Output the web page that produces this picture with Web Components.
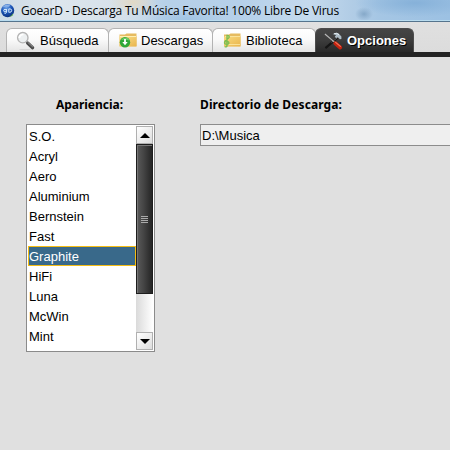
<!DOCTYPE html>
<html lang="es">
<head>
<meta charset="utf-8">
<title>GoearD</title>
<style>
html,body{margin:0;height:100%;overflow:hidden;background:#e0e0e0}
body{font:13px/20px "Liberation Sans",Arial,sans-serif;color:#000}
</style>
</head>
<body>
<goear-app></goear-app>
<script>
const define = (name, html, init) => customElements.define(name, class extends HTMLElement {
  constructor() {
    super();
    this.attachShadow({mode: 'open'}).innerHTML = html;
  }
  connectedCallback() { if (init) init(this, this.shadowRoot); }
});

/* A one-line label whose tracking is adjusted to fill the given width. */
define('fit-label', `<style>:host{display:inline-block;white-space:pre}span{display:inline-block}</style><span><slot></slot></span>`,
  (el, root) => {
    const s = root.querySelector('span'), w = +el.getAttribute('w');
    if (w) s.style.letterSpacing = (w - s.getBoundingClientRect().width) / el.textContent.length + 'px';
  });

const icons = {
  app: `<svg width="16" height="16" viewBox="0 0 16 16"><defs><radialGradient id="g" cx=".4" cy=".25" r=".8"><stop offset="0" stop-color="#6fa4e8"/><stop offset=".5" stop-color="#1c55b8"/><stop offset="1" stop-color="#0a2c78"/></radialGradient></defs><circle cx="7.6" cy="7.6" r="6.6" fill="url(#g)"/><path d="M2.6 4.4Q5 .9 10.5 1.8L9 3.8Q5 3.2 2.6 4.4Z" fill="#b5d2f5" opacity=".6"/><circle cx="5" cy="7.6" r="1.3" fill="none" stroke="#d5e9fc" stroke-width="1"/><path d="M6.6 6V9.4Q6.4 10.6 4.4 10.2M8.8 5.9h1.2q1.9.2 1.7 1.8t-2 1.6H8.8z" fill="none" stroke="#d5e9fc" stroke-width="1"/><path d="M9 13.6Q12 12.6 13 10.4L13.2 12L11.2 13.6Z" fill="#69b94f"/></svg>`,
  search: `<svg width="20" height="20" viewBox="0 0 20 20"><ellipse cx="9" cy="18.6" rx="6" ry=".7" fill="#d5d5d5"/><path d="M11.6 12L16.6 16.7" stroke="#4a4a4a" stroke-width="3.3" stroke-linecap="round"/><path d="M11.6 11.2L16.8 16" stroke="#999" stroke-width="1"/><circle cx="6.8" cy="6.7" r="5.2" fill="#edf0f1" stroke="#b4b4b4" stroke-width="1.4"/><path d="M3.3 7Q3.6 3.7 7.5 3.4" fill="none" stroke="#fff" stroke-width="1.8"/></svg>`,
  down: `<svg width="20" height="18" viewBox="0 0 20 18"><defs><linearGradient id="f" x2="1" y2="1"><stop offset="0" stop-color="#fae08e"/><stop offset="1" stop-color="#e9b54c"/></linearGradient></defs><path d="M1.5 2.5H7L8.5 1.6H18.5V14.3H1.5Z" fill="#e6bb60"/><path d="M1.5 4.5H18.5V14.5H1.5Z" fill="url(#f)"/><path d="M2 4.5H18" stroke="#fff0b4"/><circle cx="7" cy="10.2" r="5.2" fill="#2fa838"/><path d="M3 8Q5 5 9.5 5.8Q11 7 11.2 8.5Q7 7 3 8Z" fill="#80d775" opacity=".8"/><path d="M6.1 7h1.8v3h1.8L7 13.2 4.3 10h1.8z" fill="#fff"/></svg>`,
  music: `<svg width="20" height="18" viewBox="0 0 20 18"><defs><linearGradient id="f" x2="1" y2="1"><stop offset="0" stop-color="#f9da80"/><stop offset="1" stop-color="#e9b54c"/></linearGradient></defs><path d="M2 2.5H7L8.5 1.6H18.5V14.3H2Z" fill="#e6bb60"/><path d="M2 4.5H18.5V14.5H2Z" fill="url(#f)"/><path d="M3 4.5H18M3 12.5H18" stroke="#fff0b4" stroke-width=".7"/><path d="M5 14.5L5 3.4Q7.8 3.3 7 5.7L3.2 9Q1.3 11.8 4.6 12.5Q7.8 12 6.6 10Q5 9 4 10.4M5 13.5Q4.6 15.7 2.7 14.5" fill="none" stroke="#7dbf52" stroke-width="1.4"/></svg>`,
  tools: `<svg width="21" height="20" viewBox="0 0 21 20"><path d="M14.4 6.8L2.4 17.2" stroke="#151515" stroke-width="2.2"/><path d="M14.8 6.2L8.5 11.4" stroke="#777" stroke-width=".8"/><path d="M9.6 3.2Q13 .4 15.6 2.6L18.4 5.6V8L16.9 8.3L14.6 6L13.2 7.2L11.8 5.7L13 4.3Q11.6 3 9.6 3.2Z" fill="#aebdc7"/><path d="M11 2.8Q14 1.4 16 3.8" stroke="#e4ecf1" fill="none"/><path d="M1.9 3L11.5 11.2" stroke="#b9b9b9" stroke-width="1.1"/><path d="M12.4 12.2L17.2 16.5" stroke="#c5230f" stroke-width="3.9" stroke-linecap="round"/><path d="M12.6 11.4L17.4 15.4" stroke="#f4785f" stroke-width="1.1" stroke-linecap="round"/></svg>`
};
define('ui-icon', `<style>:host{display:block;flex:none}svg{display:block}</style>`,
  (el, root) => root.innerHTML += icons[el.getAttribute('name')]);

define('title-bar', `<style>
:host{display:flex;box-sizing:border-box;height:22px;padding:2px 0 0;border-bottom:1px solid #55748d;
font:12px/18px "Open Sans","Noto Sans",sans-serif;color:#000;box-shadow:inset 0 -1px #b9dcef;
background:radial-gradient(ellipse 9px 7px at 364px 14px,#6f95b8a0,transparent),radial-gradient(ellipse 60px 14px at 415px 3px,#86b1d9,transparent),radial-gradient(ellipse 24px 12px at 133px 2px,#e2d9c5,transparent),radial-gradient(ellipse 40px 12px at 185px 20px,#92bce0a0,transparent),linear-gradient(90deg,#cddae5 0,#dde6ed 60px,#d5e0ea 125px,#b7d0e8 165px,#b5d0ea 240px,#c5daed 310px,#b2cde6 350px,#a5c6e4 380px,#9cc1e3 450px)}
ui-icon{margin:1px 5px 0 0}
</style><ui-icon name="app"></ui-icon><slot></slot>`);

define('ui-tab', `<style>
:host{display:flex;box-sizing:border-box;height:24px;align-items:center;padding:1px 0 0 9px;border:1px solid #b3b3b3;border-bottom:0;border-radius:6px 6px 0 0;margin-right:-1px;background:linear-gradient(#fff,#fafafa 45%,#e4e4e4)}
:host([active]){background:linear-gradient(#454545,#3c3c3c 50%,#292929);border-color:#4c4c4c;color:#fff;font-weight:bold;text-shadow:1px 1px #000}
ui-icon{margin-right:var(--gap,4px)}
</style><ui-icon></ui-icon><slot></slot>`, (el, root) => {
  el.style.width = el.getAttribute('w') + 'px';
  const icon = document.createElement('ui-icon');
  icon.setAttribute('name', el.getAttribute('icon'));
  root.querySelector('ui-icon').replaceWith(icon);
});

define('tab-strip', `<style>
:host{display:flex;box-sizing:border-box;height:35px;padding:6px 0 0 6px;align-items:flex-start;background:linear-gradient(#e0e0e0,#dcdcdc);border-bottom:5px solid #242424}
</style><slot></slot>`);

define('list-row', `<style>
:host{display:block;box-sizing:border-box;height:20px;padding:0 1px;line-height:22px}
:host([selected]){background:#39698a;color:#fff;border:1px solid #f5bd13;padding:0;line-height:20px}
</style><slot></slot>`);

define('scroll-bar', `<style>
:host{display:flex;flex-direction:column;width:17px;background:linear-gradient(90deg,#dadada,#fff)}
.b{box-sizing:border-box;height:18px;border:1px solid #b0b0b0;background:linear-gradient(135deg,#fff,#ddd);display:flex;align-items:center;justify-content:center}
.t{box-sizing:border-box;height:150px;border:1px solid #1d1d1d;box-shadow:inset 1px 1px #777;background:linear-gradient(90deg,#5a5a5a,#444 45%,#252525);display:flex;align-items:center;justify-content:center}
.g{width:7px;height:7px;background:repeating-linear-gradient(#aaa 0 1px,transparent 1px 2px)}
.s{flex:1}svg{display:block}
</style><div class="b"><svg width="10" height="5"><path d="M0 5L5 0L10 5Z"/></svg></div><div class="t"><div class="g"></div></div><div class="s"></div><div class="b"><svg width="10" height="5"><path d="M0 0H10L5 5Z"/></svg></div>`);

define('list-box', `<style>
:host{display:flex;box-sizing:border-box;width:129px;height:228px;border:1px solid #8b8b8b;padding:1px;background:#fff}
.r{flex:1}
</style><div class="r"><slot></slot></div><scroll-bar></scroll-bar>`);

define('text-field', `<style>
:host{display:block;box-sizing:border-box;width:260px;height:22px;border:1px solid #8c8c8c;background:#efefef;padding:0 1px;line-height:22px}
</style><slot></slot>`);

define('form-group', `<style>
:host{display:flex;flex-direction:column}
.h{height:20px;margin-bottom:9px;font:bold 12px/20px "Noto Sans","Open Sans",sans-serif}
</style><div class="h"><slot name="label"></slot></div><slot></slot>`);

define('goear-app', `<style>
:host{display:block;width:450px;height:450px;overflow:hidden;background:#e0e0e0}
main{display:flex;align-items:flex-start;gap:45px;padding:38px 0 0 26px}
.a{padding-left:30px}
</style>
<title-bar><fit-label w="318">GoearD - Descarga Tu Música Favorita! 100% Libre De Virus</fit-label></title-bar>
<tab-strip>
<ui-tab icon="search" w="103">Búsqueda</ui-tab>
<ui-tab icon="down" w="105" style="--gap:3px">Descargas</ui-tab>
<ui-tab icon="music" w="104">Biblioteca</ui-tab>
<ui-tab icon="tools" w="99" active style="padding-left:7px;--gap:3px">Opciones</ui-tab>
</tab-strip>
<main>
<form-group><fit-label slot="label" class="a" w="67">Apariencia:</fit-label>
<list-box><list-row>S.O.</list-row><list-row>Acryl</list-row><list-row>Aero</list-row><list-row>Aluminium</list-row><list-row>Bernstein</list-row><list-row>Fast</list-row><list-row selected>Graphite</list-row><list-row>HiFi</list-row><list-row>Luna</list-row><list-row>McWin</list-row><list-row>Mint</list-row></list-box></form-group>
<form-group><fit-label slot="label" w="142">Directorio de Descarga:</fit-label><text-field>D:\\Musica</text-field></form-group>
</main>`);
</script>
</body>
</html>
